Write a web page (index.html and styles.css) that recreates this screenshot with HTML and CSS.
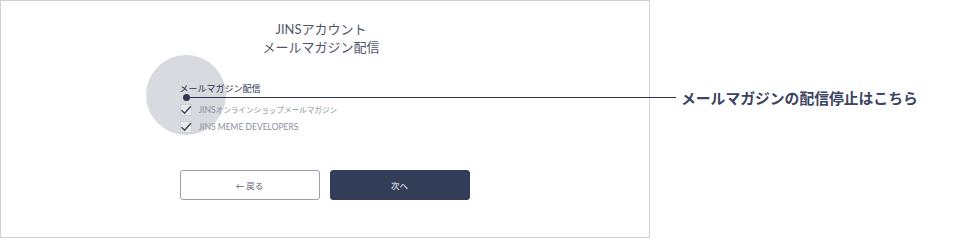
FILE: index.html
```html
<!DOCTYPE html>
<html lang="ja">
<head>
<meta charset="utf-8">
<link rel="stylesheet" href="styles.css">
</head>
<body>
<div class="stage">
  <section class="panel">
    <h1 class="title">JINSアカウント<br>メールマガジン配信</h1>
    <div class="form">
      <div class="highlight"></div>
      <p class="label">メールマガジン配信</p>
      <div class="checks">
        <label class="check"><span class="box"><svg viewBox="0 0 12 12" width="12" height="12"><path d="M1.5 6.2 L4.6 9.2 L10.8 2.2" fill="none" stroke="#3a4258" stroke-width="1.3"/></svg></span><span>JINS<span class="jp">オンラインショップメールマガジン</span></span></label>
        <label class="check"><span class="box"><svg viewBox="0 0 12 12" width="12" height="12"><path d="M1.5 6.2 L4.6 9.2 L10.8 2.2" fill="none" stroke="#3a4258" stroke-width="1.3"/></svg></span>JINS MEME DEVELOPERS</label>
      </div>
      <div class="buttons">
        <button class="btn btn-back">← 戻る</button>
        <button class="btn btn-next">次へ</button>
      </div>
    </div>
  </section>
  <div class="callout">
    <span class="dot"></span>
    <span class="leader"></span>
    <span class="callout-text">メールマガジンの配信停止はこちら</span>
  </div>
</div>
</body>
</html>
```
FILE: styles.css
```css
html, body {
  margin: 0;
  padding: 0;
  background: #ffffff;
}
body {
  font-family: Lato, "Noto Sans CJK JP", sans-serif;
}
.stage {
  position: relative;
  width: 964px;
  height: 238px;
}
.panel {
  box-sizing: border-box;
  width: 650px;
  height: 238px;
  border: 1px solid #d2d2d2;
  display: flex;
  flex-direction: column;
  align-items: center;
}
.title {
  margin: 19px 0 0 -8px;
  font-size: 13px;
  font-weight: 400;
  line-height: 18px;
  color: #50566a;
  text-align: center;
}
.form {
  position: relative;
  width: 290px;
  margin-top: 27px;
  margin-left: -1px;
}
.highlight {
  position: absolute;
  left: -34px;
  top: -28px;
  width: 80px;
  height: 80px;
  border-radius: 50%;
  background: #d9dae0;
}
.label {
  position: relative;
  margin: 0;
  font-size: 9px;
  line-height: 12px;
  color: #2e3347;
}
.checks {
  position: relative;
  margin-top: 9px;
  display: flex;
  flex-direction: column;
  gap: 5px;
}
.check {
  display: flex;
  align-items: center;
  gap: 7px;
  font-size: 8.5px;
  line-height: 12px;
  color: #8a8f9e;
}
.jp {
  font-size: 7.6px;
}
.box {
  box-sizing: border-box;
  width: 12px;
  height: 12px;
  border: 1px solid #cdcfd6;
  background: #e9eaee;
  display: flex;
  align-items: center;
  justify-content: center;
}
.box svg {
  display: block;
  width: 12px;
  height: 12px;
  flex: none;
}
.buttons {
  margin-top: 37px;
  display: flex;
  gap: 10px;
}
.btn {
  box-sizing: border-box;
  width: 140px;
  height: 30px;
  border-radius: 3px;
  font-family: Lato, "Noto Sans CJK JP", sans-serif;
  font-size: 8.5px;
  padding: 0;
}
.btn-back {
  background: #ffffff;
  border: 1.5px solid #9ba0b0;
  color: #5a6074;
}
.btn-next {
  background: #333d58;
  border: 1px solid #333d58;
  color: #ffffff;
}
.callout {
  position: absolute;
  left: 183px;
  top: 90px;
  display: flex;
  align-items: center;
  height: 14px;
}
.dot {
  width: 7px;
  height: 7px;
  border-radius: 50%;
  background: #2d3550;
}
.leader {
  width: 486px;
  height: 1px;
  background: #2d3550;
}
.callout-text {
  margin-left: 5px;
  font-family: "Noto Sans CJK JP", sans-serif;
  font-size: 14.8px;
  font-weight: 700;
  color: #3a4460;
  white-space: nowrap;
}
```
